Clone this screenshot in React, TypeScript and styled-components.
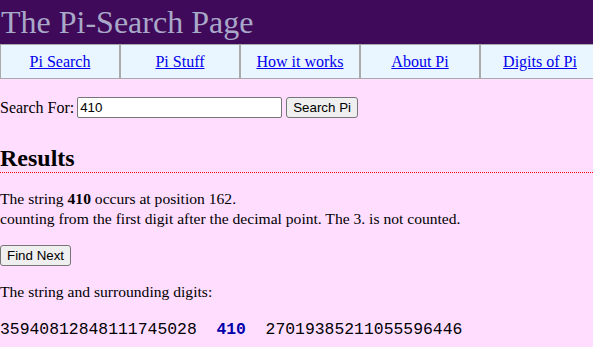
import React from "react";
import styled, { createGlobalStyle } from "styled-components";

const Global = createGlobalStyle`
  html, body { margin: 0; padding: 0; background: #ffddff; overflow: hidden; }
  body { font-family: "Liberation Serif", "Times New Roman", serif; font-size: 16px; color: #000; }
`;

const Header = styled.header`
  background: #400a5a;
  height: 44px;
  display: flex;
  align-items: center;
`;

const Title = styled.h1`
  margin: 0 0 0 1px;
  font-weight: normal;
  font-size: 32px;
  color: #a8a8c8;
  line-height: 1;
`;

const Nav = styled.nav`
  display: grid;
  grid-template-columns: repeat(5, 120px);
  width: 600px;
  height: 35px;
`;

const NavCell = styled.div`
  background: #eaf6ff;
  border: 1px solid #aaaaaa;
  display: flex;
  align-items: center;
  justify-content: center;
`;

const NavLink = styled.a`
  color: #0000ee;
  text-decoration: underline;
`;

const Form = styled.form`
  display: flex;
  align-items: center;
  margin-top: 18px;
  height: 21px;
`;

const Label = styled.label`
  margin-right: 3px;
`;

const Input = styled.input`
  font-family: "Liberation Sans", Arial, sans-serif;
  font-size: 13.33px;
  width: 205px;
  height: 21px;
  box-sizing: border-box;
  border: 1px solid #767676;
  border-radius: 2px;
  padding: 1px 2px;
  background: #fff;
  margin: 0 4px 0 0;
`;

const Button = styled.button`
  font-family: "Liberation Sans", Arial, sans-serif;
  font-size: 13.33px;
  height: 21px;
  box-sizing: border-box;
  padding: 1px 6px;
  border: 1px solid #767676;
  border-radius: 3px;
  background: #efefef;
  color: #000;
  margin: 0;
`;

const Heading = styled.h2`
  margin: 27px 0 0;
  font-size: 24px;
  font-weight: bold;
  line-height: 27px;
  border-bottom: 1px dotted #ff0000;
`;

const Para = styled.p`
  margin: 16px 0 0;
  font-size: 15.6px;
  line-height: 20px;
`;

const Mono = styled.p`
  margin: 18px 0 0;
  font-family: "Liberation Mono", "DejaVu Sans Mono", monospace;
  font-size: 16.4px;
  line-height: 20px;
  white-space: pre;
`;

const Hit = styled.b`
  color: #0000aa;
`;

const links = ["Pi Search", "Pi Stuff", "How it works", "About Pi", "Digits of Pi"];

export default function App() {
  return (
    <>
      <Global />
      <Header>
        <Title>The Pi-Search Page</Title>
      </Header>
      <Nav>
        {links.map((l) => (
          <NavCell key={l}>
            <NavLink href="#">{l}</NavLink>
          </NavCell>
        ))}
      </Nav>
      <Form onSubmit={(e) => e.preventDefault()}>
        <Label>Search For:</Label>
        <Input defaultValue="410" />
        <Button type="submit">Search Pi</Button>
      </Form>
      <Heading>Results</Heading>
      <Para>
        The string <b>410</b> occurs at position 162.
        <br />
        counting from the first digit after the decimal point. The 3. is not counted.
      </Para>
      <Para>
        <Button type="button">Find Next</Button>
      </Para>
      <Para>The string and surrounding digits:</Para>
      <Mono>
        {"35940812848111745028  "}
        <Hit>410</Hit>
        {"  27019385211055596446"}
      </Mono>
    </>
  );
}
